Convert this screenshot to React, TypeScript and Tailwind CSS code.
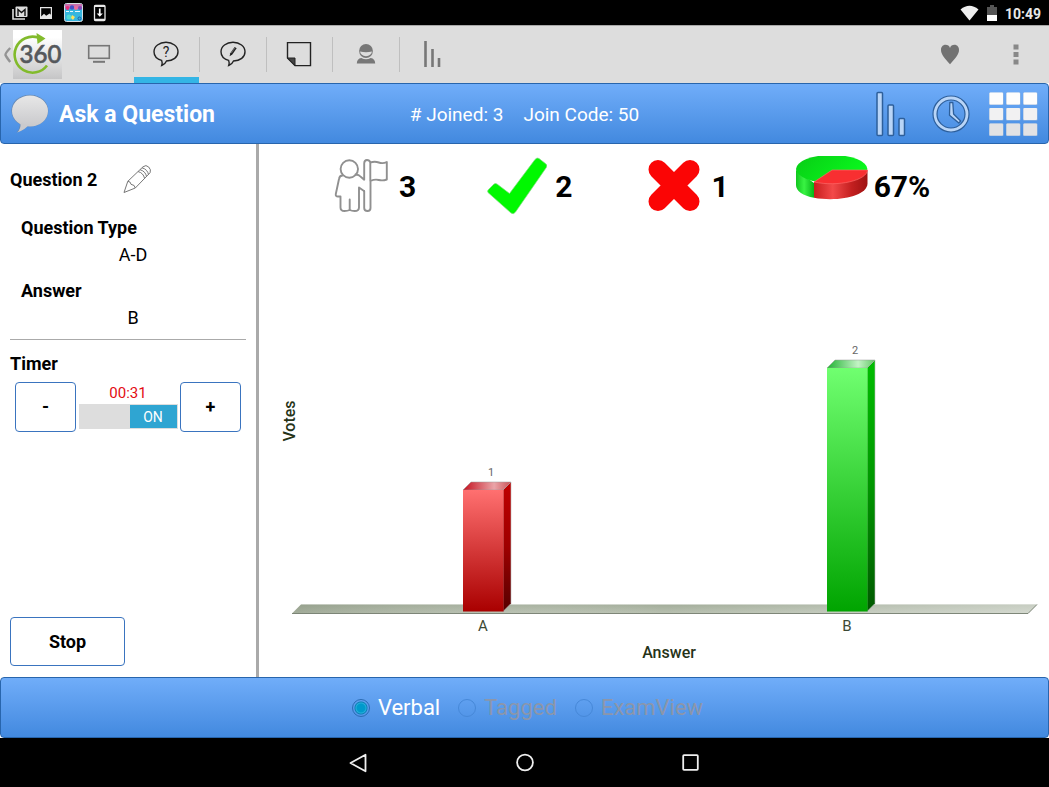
import { useState } from "react";
import type { ReactNode } from "react";

function StatusBar() {
  return (
    <div className="flex h-[25px] items-center justify-between bg-black pr-2 pl-3">
      <div className="flex items-center gap-[10px]">
        <svg width="16" height="14" viewBox="0 0 16 14" aria-hidden="true">
          <path d="M1 3v10h12" fill="none" stroke="#ddd" strokeWidth="1.6" />
          <rect x="3.500" y="0.500" width="12" height="10.500" rx="1" fill="#ddd" />
          <path d="M6 10V3.500L9.500 6.500 13 3.500V10" fill="none" stroke="#111" strokeWidth="1.400" />
        </svg>
        <svg width="16" height="14" viewBox="0 0 16 14" aria-hidden="true">
          <path fillRule="evenodd" d="M2 1h12v12H2zM3.200 2.200v8.200l2.800-2.600 2.200 2 3.400-2.200 1.200 1.200V2.200z" fill="#e5e5e5" />
        </svg>
        <svg width="19" height="19" viewBox="0 0 19 19" aria-hidden="true">
          <rect x="0.500" y="0.500" width="18" height="18" rx="2" fill="#35b6df" stroke="#d7dde3" />
          <rect x="1" y="1" width="17" height="4" fill="#ca6fae" />
          <circle cx="3.500" cy="5" r="2" fill="#e4317d" />
          <circle cx="8" cy="4.500" r="2.200" fill="#4650c9" />
          <circle cx="12" cy="5" r="2" fill="#ef6a9e" />
          <circle cx="16" cy="5" r="2" fill="#8446b9" />
          <path d="M2 8h3v1H2zM6 8h3v1H6zM11 8h5v1h-5z" fill="#e8f8fc" />
          <circle cx="5" cy="14" r="2.500" fill="#51dbd4" />
          <path d="M8 12l3 2-2 3-2-2z" fill="#ffe35b" />
          <circle cx="15.500" cy="15.500" r="1.500" fill="none" stroke="#1b5fa7" />
        </svg>
        <svg width="14" height="18" viewBox="0 0 14 18" aria-hidden="true">
          <rect x="1.500" y="1.500" width="10.500" height="15" rx="1" fill="none" stroke="#e8e8e8" strokeWidth="1.300" />
          <path d="M1.500 2h10.500M1.500 15.800h10.500" stroke="#e8e8e8" strokeWidth="2" />
          <path d="M5.900 4.500h1.700v5h2.200l-3.050 3.200L3.700 9.500h2.200z" fill="#fff" />
        </svg>
      </div>
      <div className="flex items-center">
        <svg width="19" height="16" viewBox="0 0 19 16" aria-hidden="true">
          <path d="M0.500 4.500Q9.500-3 18.500 4.500L9.500 15.500z" fill="#eee" />
        </svg>
        <svg className="ml-2" width="10" height="16" viewBox="0 0 10 16" aria-hidden="true">
          <path d="M3 0h4v2h3v14H0V2h3z" fill="#555" />
          <path d="M0 10h10v6H0z" fill="#fff" />
        </svg>
        <span className="ml-2 pt-[2px] text-[14px] leading-none font-bold text-[#e8e8e8]">10:49</span>
      </div>
    </div>
  );
}

function BubbleOutline({ children }: { children: ReactNode }) {
  return (
    <svg width="28" height="28" viewBox="0 0 28 28" aria-hidden="true">
      <path
        d="M9.600 20.300C5 19 2 15.700 2 11.700 2 6.300 7.300 2.300 14 2.300s12 4 12 9.400-5 9.300-11.500 9.300Q13 24.500 9.700 25.500 10.700 23 9.600 20.300z"
        fill="none"
        stroke="#222"
        strokeWidth="1.400"
      />
      {children}
    </svg>
  );
}

const tabs: { name: string; icon: ReactNode }[] = [
  {
    name: "Display",
    icon: (
      <svg width="24" height="20" viewBox="0 0 24 20" aria-hidden="true">
        <rect x="1.700" y="1.700" width="20.600" height="12.600" fill="none" stroke="#777" strokeWidth="1.600" />
        <path d="M6 17.800h12" stroke="#777" strokeWidth="2" />
      </svg>
    ),
  },
  {
    name: "Ask a question",
    icon: (
      <BubbleOutline>
        <text x="14" y="16.500" textAnchor="middle" fontSize="14" fill="#222">?</text>
      </BubbleOutline>
    ),
  },
  {
    name: "Edit question",
    icon: (
      <BubbleOutline>
        <path d="M10.600 16.200l.7-3 4.300-6.300 2.100 1.400-4.400 6.300z" fill="#222" />
        <path d="M12.300 13l3.600-5.200" stroke="#999" strokeWidth="0.600" />
      </BubbleOutline>
    ),
  },
  {
    name: "Note",
    icon: (
      <svg width="28" height="28" viewBox="0 0 28 28" aria-hidden="true">
        <path d="M2.500 2.600h23v23H10L2.500 18z" fill="none" stroke="#222" strokeWidth="1.400" />
        <path d="M2.500 18H10v7.500z" fill="#444" stroke="#222" />
      </svg>
    ),
  },
  {
    name: "Students",
    icon: (
      <svg width="20" height="22" viewBox="0 0 20 22" aria-hidden="true">
        <circle cx="10" cy="8" r="6.900" fill="#777" />
        <path d="M4 8.600Q10 9.800 16 8.600 15.200 13 10 13.200 4.800 13 4 8.600z" fill="#ddd" />
        <path d="M0.800 20.500Q1 15.500 5.300 15q4.700 2.500 9.400 0 4.300.5 4.500 5.500z" fill="#777" />
      </svg>
    ),
  },
  {
    name: "Results",
    icon: (
      <svg width="18" height="28" viewBox="0 0 18 28" aria-hidden="true">
        <path d="M2.500 1v26M9.500 9v18M16 18v9" stroke="#777" strokeWidth="2.600" />
      </svg>
    ),
  },
];

function Toolbar() {
  const [active, setActive] = useState(1);
  return (
    <nav className="flex h-[58px] items-stretch border-t border-[#a8a8a8] bg-[#ddd]" aria-label="Main">
      <button className="flex items-center gap-px pl-1" aria-label="Back">
        <svg width="8" height="16" viewBox="0 0 8 16" aria-hidden="true">
          <path d="M6.200 1Q1 6.500 1.500 8T6.200 15" fill="none" stroke="#949494" strokeWidth="2.400" />
        </svg>
        <svg width="49" height="49" viewBox="0 0 49 49" aria-hidden="true">
          <defs>
            <linearGradient id="logo" x2="0" y2="1">
              <stop offset="0.150" stopColor="#fff" />
              <stop offset="1" stopColor="#c5c5c6" />
            </linearGradient>
          </defs>
          <path d="M0 0h49v49H0z" fill="url(#logo)" />
          <path d="M34 35.500A18 18 0 1 1 25 7.500" fill="none" stroke="#82bb2c" strokeWidth="2.600" />
          <path d="M23.500 3L32.500 8.500 24.500 14z" fill="#82bb2c" />
          <text x="27.500" y="33" textAnchor="middle" fontSize="24" fontWeight="500" fontFamily="Lato, sans-serif" fill="#55585c" stroke="#55585c" strokeWidth="0.600">360</text>
        </svg>
      </button>
      <div className="ml-1 flex w-[399px]">
        {tabs.map((tab, i) => (
          <div key={tab.name} className="flex flex-1">
            {i > 0 && <span className="mt-[11px] h-[35px] w-px bg-[#bfbfbf]" />}
            <button
              aria-label={tab.name}
              onClick={() => setActive(i)}
              className={`flex flex-1 items-center justify-center border-b-[6px] pt-[5px] ${
                i === active ? "border-[#33b5e5]" : "border-transparent"
              }`}
            >
              {tab.icon}
            </button>
          </div>
        ))}
      </div>
      <div className="ml-auto flex items-center">
        <button className="flex w-[66px] justify-center" aria-label="Favorite">
          <svg width="20" height="22" viewBox="0 0 20 22" aria-hidden="true">
            <path d="M10 20.300C5 14.500 1 10.500 1 6c0-3 1.900-5.200 4.500-5.200C7.700.8 9.400 2 10 4c.6-2 2.300-3.200 4.500-3.200C17.100.8 19 3 19 6c0 4.500-4 8.500-9 14.300z" fill="#727272" />
          </svg>
        </button>
        <button className="flex w-[66px] justify-center" aria-label="More options">
          <svg width="6" height="22" viewBox="0 0 6 22" aria-hidden="true">
            <path d="M0.500 0.500h5v5h-5zM0.500 8h5v5h-5zM0.500 15.500h5v5h-5z" fill="#888" />
          </svg>
        </button>
      </div>
    </nav>
  );
}

function Header() {
  return (
    <header className="grid h-[61px] grid-cols-[1fr_auto_1fr] items-center rounded-[4px] border border-[#2865ac] bg-linear-to-b from-[#70adf9] to-[#4289df] px-[10px] pt-px text-white">
      <div className="flex items-center gap-[10px]">
        <svg width="38" height="40" viewBox="0 0 38 40" aria-hidden="true">
          <defs>
            <linearGradient id="bubble" x2="0" y2="1">
              <stop offset="0" stopColor="#e7e7e7" />
              <stop offset="1" stopColor="#c9c9cc" />
            </linearGradient>
          </defs>
          <path d="M19 1C29.500 1 37.300 8 37.300 16.700S29.500 32.500 19 32.500q-1.500 0-2.500-.2Q13 36.500 5.500 38.600 8.800 35 9 30.200 0.700 26 0.700 16.700 0.700 8 19 1z" fill="#6689b4" />
          <ellipse cx="18.700" cy="16.400" rx="18.300" ry="15.600" fill="#6689b4" />
          <ellipse cx="19" cy="17" rx="18" ry="15.500" fill="url(#bubble)" />
          <path d="M9.500 29Q10 35 6.200 38.500 14 36 17.500 31z" fill="#cacacd" />
        </svg>
        <h1 className="text-[23px] leading-none font-bold">Ask a Question</h1>
      </div>
      <div className="flex gap-5 text-[19px] leading-none">
        <span># Joined: 3</span>
        <span>Join Code: 50</span>
      </div>
      <div className="flex items-center justify-end">
        <button aria-label="Show results">
          <svg width="32" height="46" viewBox="0 0 32 46" aria-hidden="true">
            <g fill="#b9d5f7" stroke="#2d5f9b" strokeWidth="1.500">
              <rect x="2" y="1.500" width="5.500" height="43" rx="1" />
              <rect x="13" y="14" width="5.500" height="30.500" rx="1" />
              <rect x="24" y="27.500" width="5.500" height="17" rx="1" />
            </g>
          </svg>
        </button>
        <button className="ml-[25px]" aria-label="Timer">
          <svg width="38" height="38" viewBox="0 0 38 38" aria-hidden="true">
            <circle cx="19" cy="19" r="16" fill="none" stroke="#2d5f9b" strokeWidth="5.200" />
            <circle cx="19" cy="19" r="16" fill="none" stroke="#b9d5f7" strokeWidth="2.800" />
            <path d="M17.800 7.500h3l.8 11.500 7 7-1.800 2-9.300-7.700z" fill="#b9d5f7" stroke="#2d5f9b" strokeWidth="1.300" strokeLinejoin="round" />
          </svg>
        </button>
        <button className="ml-[18px]" aria-label="Grid">
          <svg width="50" height="46" viewBox="0 0 50 46" aria-hidden="true">
            {[0, 1, 2].map((r) =>
              [0, 1, 2].map((c) => (
                <g key={`${r}-${c}`}>
                  <rect x={1 + c * 17} y={1.500 + r * 15.500} width="14.500" height="12.500" rx="1" fill="#9cb9dc" />
                  <rect x={1.500 + c * 17} y={1.500 + r * 15.500} width="13.500" height="12" rx="1" fill={["#fdfdfd", "#f1f1f2", "#e2e2e4"][r]} />
                </g>
              ))
            )}
          </svg>
        </button>
      </div>
    </header>
  );
}

const outlined =
  "rounded-[4px] border border-[#3a74bf] bg-white font-bold text-black";

function Sidebar() {
  const [on, setOn] = useState(true);
  return (
    <aside className="flex w-[259px] shrink-0 flex-col border-r-[3px] border-[#aaa] px-[10px] pb-[11px] text-[18px] leading-6 text-black">
      <div className="mt-5 flex items-center gap-[26px]">
        <h2 className="pt-[2px] font-bold">Question 2</h2>
        <button aria-label="Edit question">
          <svg width="29" height="30" viewBox="0 0 29 30" aria-hidden="true">
            <g fill="none" stroke="#777" strokeWidth="1" strokeLinejoin="round">
              <path d="M1 28.500L4.800 17.300 20 2.800q3-2.500 5.700.2t1.400 5.700L12.300 24z" />
              <path d="M4.800 17.300q3 .2 3.200 3 4 .5 4.300 3.700M15 7.500q5.500 1.500 6.600 7M17 5.700q5.500 1.500 6.600 7M19 3.800q5.500 1.500 6.600 7" />
            </g>
          </svg>
        </button>
      </div>
      <dl className="mt-[22px] pl-[11px]">
        <dt className="font-bold">Question Type</dt>
        <dd className="mt-[3px] pr-[1px] text-center">A-D</dd>
        <dt className="mt-3 font-bold">Answer</dt>
        <dd className="mt-[3px] pr-[1px] text-center">B</dd>
      </dl>
      <hr className="mt-[9px] border-[#aaa]" />
      <h2 className="mt-3 font-bold">Timer</h2>
      <div className="mt-[6px] flex items-stretch justify-between px-[5px]">
        <button className={`h-[50px] w-[61px] ${outlined}`} aria-label="Decrease time">-</button>
        <div className="flex flex-col items-center justify-end pb-[3px]">
          <span className="text-[15px] leading-[22px] text-[#e30b12]">00:31</span>
          <button
            role="switch"
            aria-checked={on}
            aria-label="Timer"
            onClick={() => setOn(!on)}
            className={`flex h-[25px] w-[99px] bg-[#ddd] p-px ${on ? "justify-end" : "justify-start"}`}
          >
            <span className="h-[23px] w-[47px] bg-[#2fa5d2] text-center text-[14px] leading-[24px] text-white">
              {on ? "ON" : "OFF"}
            </span>
          </button>
        </div>
        <button className={`h-[50px] w-[61px] ${outlined}`} aria-label="Increase time">+</button>
      </div>
      <button className={`mt-auto h-[49px] w-[115px] pt-px ${outlined}`}>Stop</button>
    </aside>
  );
}

function Stats() {
  return (
    <div className="flex h-20 items-start gap-[67px] pt-3 pl-[68px] text-[30px] leading-[62px] font-bold text-black">
      <div className="flex items-start gap-2">
        <svg width="64" height="60" viewBox="0 0 64 60" role="img" aria-label="Participants">
          <g fill="none" stroke="#909090" strokeWidth="1.900" strokeLinejoin="round" strokeLinecap="round">
            <path d="M15.500 19.500Q12.500 19.500 12 23L8.800 38q-.5 2.500 2.200 2.500h2.500V51.500q0 3.500 4 3.500 3 0 5.200-1 2 1 5 1 4.300 0 4.300-3.500V31.500l5 3.500" />
            <path d="M28.500 18.500q3.500 0 5.500 2.500l3.200 2.700V7.500Q37.200 4 40 4q2.500 0 3.300 2.500 4.500-1.500 8.500 0t8-.5v17.500q-4 1.500-8 .5t-8.300 1V52q0 3-3 3-3.300 0-3.300-3V35M43.300 6.500V25M22.700 43.500V54" />
            <circle cx="22.300" cy="13" r="8.700" />
          </g>
        </svg>
        <span>3</span>
      </div>
      <div className="flex items-start gap-2">
        <svg width="64" height="60" viewBox="0 0 64 60" role="img" aria-label="Correct">
          <path d="M5 36.500q-1-1.500.5-3l5.500-5.500q1.500-1 3 0l12.500 9.500L52 3.500q2-2.500 4-1l7 5.500q1.500 1.500.3 3.500L32.500 56q-2 2.800-4.500 1z" fill="#00f800" stroke="#7edb7e" strokeWidth="0.700" />
        </svg>
        <span>2</span>
      </div>
      <div className="flex items-start gap-2">
        <svg width="64" height="60" viewBox="0 0 64 60" role="img" aria-label="Incorrect">
          <path d="M19 13.500l32 32M51 13.500l-32 32" stroke="#fb0505" strokeWidth="19" strokeLinecap="round" />
        </svg>
        <span>1</span>
      </div>
      <div className="flex items-start gap-1">
        <svg width="74" height="60" viewBox="0 0 74 60" role="img" aria-label="Percent correct">
          <defs>
            <linearGradient id="pieGreen"><stop stopColor="#10c51d" /><stop offset="0.450" stopColor="#39f343" /><stop offset="1" stopColor="#06b517" /></linearGradient>
            <linearGradient id="pieRed"><stop stopColor="#c71d1d" /><stop offset="0.350" stopColor="#f34949" /><stop offset="0.700" stopColor="#c42020" /><stop offset="1" stopColor="#9e1212" /></linearGradient>
            <linearGradient id="pieTop" x2="1" y2="0.400"><stop stopColor="#08cc15" /><stop offset="1" stopColor="#09f81d" /></linearGradient>
          </defs>
          <path d="M0 14v15c0 6 7 11 18 12.700V27z" fill="url(#pieGreen)" />
          <path d="M18 26v15.700c25 4.500 53-2 53.500-14V14z" fill="url(#pieRed)" />
          <ellipse cx="35.700" cy="13" rx="35.700" ry="14" fill="url(#pieTop)" />
          <path d="M36 14h35.500C71 24.500 42 31 18 26z" fill="#f82f31" stroke="#ff7070" strokeWidth="0.600" />
        </svg>
        <span>67%</span>
      </div>
    </div>
  );
}

const bars = [
  { answer: "A", votes: 1, x: 204, top: 266, front: "url(#redFront)", side: "url(#redSide)", cap: "url(#redCap)" },
  { answer: "B", votes: 2, x: 568, top: 144, front: "url(#greenFront)", side: "url(#greenSide)", cap: "url(#greenCap)" },
];

function VotesChart() {
  return (
    <svg className="min-h-0 w-full flex-1" viewBox="0 0 790 453" role="img" aria-label="Votes by answer">
      <defs>
        <linearGradient id="redFront" x2="0" y2="1"><stop stopColor="#ff7070" /><stop offset="1" stopColor="#a90000" /></linearGradient>
        <linearGradient id="redSide" x2="0" y2="1"><stop stopColor="#c00000" /><stop offset="0.500" stopColor="#9e0000" /><stop offset="1" stopColor="#550000" /></linearGradient>
        <linearGradient id="redCap" x2="1" y2="0"><stop stopColor="#c51220" /><stop offset="0.650" stopColor="#eaa4a8" /><stop offset="1" stopColor="#cc5358" /></linearGradient>
        <linearGradient id="greenFront" x2="0" y2="1"><stop stopColor="#70ff70" /><stop offset="1" stopColor="#00a400" /></linearGradient>
        <linearGradient id="greenSide" x2="0" y2="1"><stop stopColor="#00bd00" /><stop offset="0.500" stopColor="#009600" /><stop offset="1" stopColor="#005800" /></linearGradient>
        <linearGradient id="greenCap" x2="1" y2="0"><stop stopColor="#20b332" /><stop offset="0.650" stopColor="#c3f3c5" /><stop offset="1" stopColor="#65c768" /></linearGradient>
        <linearGradient id="floor" x2="0" y2="1"><stop stopColor="#a3ad9a" /><stop offset="1" stopColor="#b9c1b1" /></linearGradient>
        <linearGradient id="floorLight"><stop stopColor="#7c8872" stopOpacity="0.350" /><stop offset="0.500" stopColor="#fff" stopOpacity="0" /><stop offset="1" stopColor="#fff" stopOpacity="0.400" /></linearGradient>
      </defs>
      <path d="M33 389.500L42 380.500H778L769 389.500z" fill="url(#floor)" />
      <path d="M33 389.500L42 380.500H778L769 389.500z" fill="url(#floorLight)" />
      <path d="M33 389.500H769L778 380.500" fill="none" stroke="#737c6d" strokeWidth="0.900" />
      {bars.map((b) => (
        <g key={b.answer}>
          <path d={`M${b.x + 40} ${b.top}l8-8V379.500l-8 8z`} fill={b.side} stroke="#bbb" strokeWidth="0.600" />
          <path d={`M${b.x} ${b.top}l8-8h40l-8 8z`} fill={b.cap} stroke="#999" strokeWidth="0.500" />
          <path d={`M${b.x} ${b.top}h40.500V387.500h-40.500z`} fill={b.front} />
          <text x={b.x + 28} y={b.top - 14} textAnchor="middle" fontSize="11" fill="#666">{b.votes}</text>
          <text x={b.x + 20} y="407" textAnchor="middle" fontSize="15" fill="#3c4934">{b.answer}</text>
        </g>
      ))}
      <text x="410" y="434" textAnchor="middle" fontSize="16" fontWeight="500" fill="#263318">Answer</text>
      <text transform="translate(36 197) rotate(-90)" textAnchor="middle" fontSize="16" fontWeight="500" fill="#263318">Votes</text>
    </svg>
  );
}

const modes = ["Verbal", "Tagged", "ExamView"];

function ModeBar() {
  return (
    <footer className="flex h-[61px] items-center justify-center gap-[18px] rounded-[4px] border border-[#2865ac] bg-linear-to-b from-[#70adf9] to-[#4289df] pl-[6px]">
      {modes.map((mode, i) => (
        <label key={mode} className={`flex items-center gap-2 text-[22px] leading-none ${i === 0 ? "text-white" : "text-[#8c96aa]"}`}>
          <input
            type="radio"
            name="mode"
            defaultChecked={i === 0}
            disabled={i > 0}
            className="size-[18px] appearance-none rounded-full border border-[#2b6cb4] checked:bg-[radial-gradient(circle,#0099cc_0_4px,#26b0dc_5px,#0d80b5_6px,transparent_7px)] disabled:border-[#4688d8]"
          />
          <span className="pt-px">{mode}</span>
        </label>
      ))}
    </footer>
  );
}

function SystemNav() {
  return (
    <div className="flex h-[49px] items-center justify-center gap-[146px] bg-black">
      <button aria-label="Back">
        <svg width="20" height="20" viewBox="0 0 20 20" aria-hidden="true">
          <path d="M16.500 1.700v16.600L1.500 10z" fill="none" stroke="#eee" strokeWidth="1.800" strokeLinejoin="round" />
        </svg>
      </button>
      <button aria-label="Home">
        <svg width="20" height="20" viewBox="0 0 20 20" aria-hidden="true">
          <circle cx="10" cy="9.500" r="7.900" fill="none" stroke="#eee" strokeWidth="1.800" />
        </svg>
      </button>
      <button aria-label="Recent apps">
        <svg width="20" height="20" viewBox="0 0 20 20" aria-hidden="true">
          <rect x="2.200" y="2.200" width="14.600" height="14.600" rx="0.800" fill="none" stroke="#eee" strokeWidth="1.800" />
        </svg>
      </button>
    </div>
  );
}

export default function App() {
  return (
    <div className="flex min-h-screen flex-col bg-white font-[Roboto,sans-serif]">
      <StatusBar />
      <Toolbar />
      <Header />
      <main className="flex flex-1">
        <Sidebar />
        <section className="flex min-w-0 flex-1 flex-col">
          <Stats />
          <VotesChart />
        </section>
      </main>
      <ModeBar />
      <SystemNav />
    </div>
  );
}
